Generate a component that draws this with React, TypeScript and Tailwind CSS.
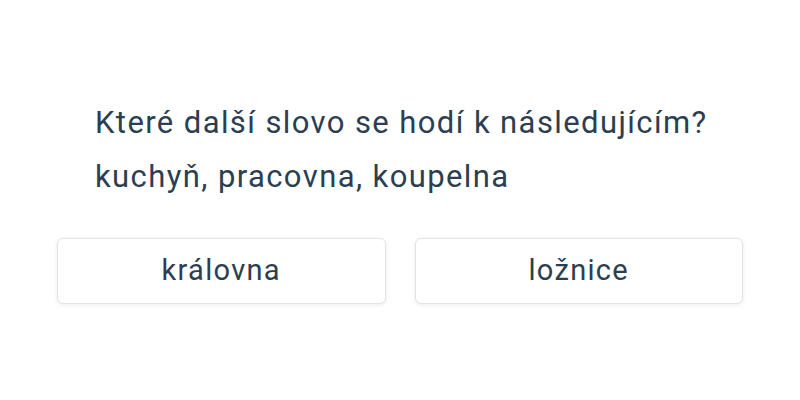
const options = ["královna", "ložnice"];

export default function App() {
  return (
    <div className="w-[800px] h-[400px] bg-white text-[#2c3e50] font-[Roboto,'Noto_Sans',sans-serif] flex flex-col items-center">
      <div className="w-[686px] pt-[96px]">
        <div className="pl-[38px] text-[31px] leading-[54px] tracking-[1.4px] whitespace-nowrap">
          <p>Které další slovo se hodí k následujícím?</p>
          <p>kuchyň, pracovna, koupelna</p>
        </div>
        <div className="mt-[34px] grid grid-cols-2 gap-[29px]">
          {options.map((o) => (
            <button
              key={o}
              className="h-[66px] flex items-center justify-center rounded-[6px] border border-[#e3e3e3] bg-white shadow-[0_1px_4px_rgba(0,0,0,0.08)] text-[29px] tracking-[1.3px] text-[#2c3e50]"
            >
              {o}
            </button>
          ))}
        </div>
      </div>
    </div>
  );
}
